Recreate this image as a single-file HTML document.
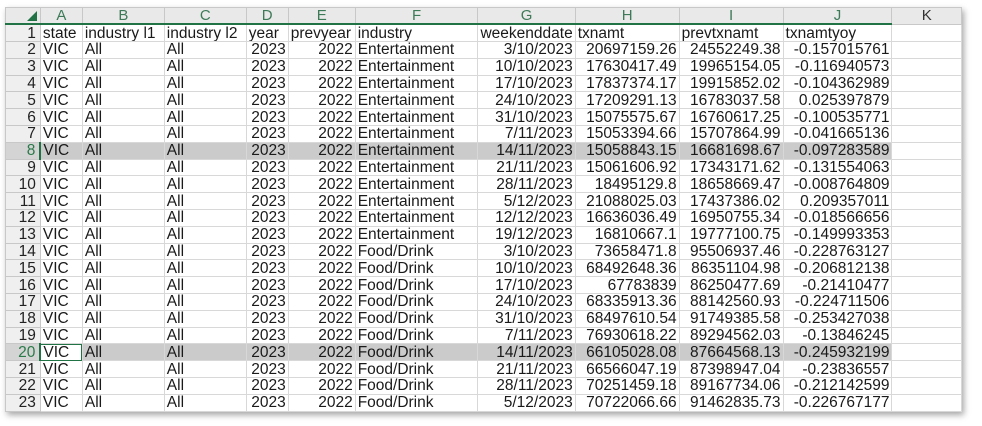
<!DOCTYPE html><html><head><style>
body{margin:0;background:#fff;width:982px;height:426px;overflow:hidden;font-family:"Liberation Sans",sans-serif;}
#f{position:absolute;left:5px;top:7px;width:957px;height:405px;background:#fff;box-shadow:2px 3px 6px rgba(0,0,0,.35);overflow:hidden;}
table{border-collapse:collapse;table-layout:fixed;position:absolute;left:0;top:0;}
td{border:1px solid #d8d8d8;height:15.8px;padding:0 2px;font-size:15.5px;line-height:15px;color:#1a1a1a;white-space:nowrap;overflow:hidden;}
tr{height:16.8px}
td.r{text-align:right}
tr.h td{background:#e9e9e9;color:#3c7a58;text-align:center;border-color:#c8c8c8;border-bottom:2px solid #217346;height:15px;font-size:15px}
tr.h td.k{color:#333;border-bottom:1px solid #c8c8c8}
td.n{background:#efefef;text-align:right;padding-right:4px;color:#222;border-color:#c8c8c8}
tr.s td{background:#cbcbcb}
tr.s td.n{background:#d4d4d4;color:#2a7a4a;border-right:2px solid #217346}
</style></head><body><div id="f"><table>
<colgroup><col style="width:35px"><col style="width:42px"><col style="width:82px"><col style="width:82px"><col style="width:42px"><col style="width:67px"><col style="width:123px"><col style="width:96px"><col style="width:104px"><col style="width:104px"><col style="width:109px"><col style="width:70px"></colgroup>
<tr class="h"><td style="position:relative"><span style="position:absolute;right:3px;bottom:2px;width:0;height:0;border-left:10px solid transparent;border-bottom:10px solid #217346"></span></td><td>A</td><td>B</td><td>C</td><td>D</td><td>E</td><td>F</td><td>G</td><td>H</td><td>I</td><td>J</td><td class="k">K</td></tr>
<tr><td class="n">1</td><td>state</td><td>industry l1</td><td>industry l2</td><td>year</td><td>prevyear</td><td>industry</td><td>weekenddate</td><td>txnamt</td><td>prevtxnamt</td><td>txnamtyoy</td><td></td></tr>
<tr><td class="n">2</td><td>VIC</td><td>All</td><td>All</td><td class="r">2023</td><td class="r">2022</td><td>Entertainment</td><td class="r">3/10/2023</td><td class="r">20697159.26</td><td class="r">24552249.38</td><td class="r">-0.157015761</td><td></td></tr>
<tr><td class="n">3</td><td>VIC</td><td>All</td><td>All</td><td class="r">2023</td><td class="r">2022</td><td>Entertainment</td><td class="r">10/10/2023</td><td class="r">17630417.49</td><td class="r">19965154.05</td><td class="r">-0.116940573</td><td></td></tr>
<tr><td class="n">4</td><td>VIC</td><td>All</td><td>All</td><td class="r">2023</td><td class="r">2022</td><td>Entertainment</td><td class="r">17/10/2023</td><td class="r">17837374.17</td><td class="r">19915852.02</td><td class="r">-0.104362989</td><td></td></tr>
<tr><td class="n">5</td><td>VIC</td><td>All</td><td>All</td><td class="r">2023</td><td class="r">2022</td><td>Entertainment</td><td class="r">24/10/2023</td><td class="r">17209291.13</td><td class="r">16783037.58</td><td class="r">0.025397879</td><td></td></tr>
<tr><td class="n">6</td><td>VIC</td><td>All</td><td>All</td><td class="r">2023</td><td class="r">2022</td><td>Entertainment</td><td class="r">31/10/2023</td><td class="r">15075575.67</td><td class="r">16760617.25</td><td class="r">-0.100535771</td><td></td></tr>
<tr><td class="n">7</td><td>VIC</td><td>All</td><td>All</td><td class="r">2023</td><td class="r">2022</td><td>Entertainment</td><td class="r">7/11/2023</td><td class="r">15053394.66</td><td class="r">15707864.99</td><td class="r">-0.041665136</td><td></td></tr>
<tr class="s"><td class="n">8</td><td>VIC</td><td>All</td><td>All</td><td class="r">2023</td><td class="r">2022</td><td>Entertainment</td><td class="r">14/11/2023</td><td class="r">15058843.15</td><td class="r">16681698.67</td><td class="r">-0.097283589</td><td style="background:#fff"></td></tr>
<tr><td class="n">9</td><td>VIC</td><td>All</td><td>All</td><td class="r">2023</td><td class="r">2022</td><td>Entertainment</td><td class="r">21/11/2023</td><td class="r">15061606.92</td><td class="r">17343171.62</td><td class="r">-0.131554063</td><td></td></tr>
<tr><td class="n">10</td><td>VIC</td><td>All</td><td>All</td><td class="r">2023</td><td class="r">2022</td><td>Entertainment</td><td class="r">28/11/2023</td><td class="r">18495129.8</td><td class="r">18658669.47</td><td class="r">-0.008764809</td><td></td></tr>
<tr><td class="n">11</td><td>VIC</td><td>All</td><td>All</td><td class="r">2023</td><td class="r">2022</td><td>Entertainment</td><td class="r">5/12/2023</td><td class="r">21088025.03</td><td class="r">17437386.02</td><td class="r">0.209357011</td><td></td></tr>
<tr><td class="n">12</td><td>VIC</td><td>All</td><td>All</td><td class="r">2023</td><td class="r">2022</td><td>Entertainment</td><td class="r">12/12/2023</td><td class="r">16636036.49</td><td class="r">16950755.34</td><td class="r">-0.018566656</td><td></td></tr>
<tr><td class="n">13</td><td>VIC</td><td>All</td><td>All</td><td class="r">2023</td><td class="r">2022</td><td>Entertainment</td><td class="r">19/12/2023</td><td class="r">16810667.1</td><td class="r">19777100.75</td><td class="r">-0.149993353</td><td></td></tr>
<tr><td class="n">14</td><td>VIC</td><td>All</td><td>All</td><td class="r">2023</td><td class="r">2022</td><td>Food/Drink</td><td class="r">3/10/2023</td><td class="r">73658471.8</td><td class="r">95506937.46</td><td class="r">-0.228763127</td><td></td></tr>
<tr><td class="n">15</td><td>VIC</td><td>All</td><td>All</td><td class="r">2023</td><td class="r">2022</td><td>Food/Drink</td><td class="r">10/10/2023</td><td class="r">68492648.36</td><td class="r">86351104.98</td><td class="r">-0.206812138</td><td></td></tr>
<tr><td class="n">16</td><td>VIC</td><td>All</td><td>All</td><td class="r">2023</td><td class="r">2022</td><td>Food/Drink</td><td class="r">17/10/2023</td><td class="r">67783839</td><td class="r">86250477.69</td><td class="r">-0.21410477</td><td></td></tr>
<tr><td class="n">17</td><td>VIC</td><td>All</td><td>All</td><td class="r">2023</td><td class="r">2022</td><td>Food/Drink</td><td class="r">24/10/2023</td><td class="r">68335913.36</td><td class="r">88142560.93</td><td class="r">-0.224711506</td><td></td></tr>
<tr><td class="n">18</td><td>VIC</td><td>All</td><td>All</td><td class="r">2023</td><td class="r">2022</td><td>Food/Drink</td><td class="r">31/10/2023</td><td class="r">68497610.54</td><td class="r">91749385.58</td><td class="r">-0.253427038</td><td></td></tr>
<tr><td class="n">19</td><td>VIC</td><td>All</td><td>All</td><td class="r">2023</td><td class="r">2022</td><td>Food/Drink</td><td class="r">7/11/2023</td><td class="r">76930618.22</td><td class="r">89294562.03</td><td class="r">-0.13846245</td><td></td></tr>
<tr class="s"><td class="n">20</td><td style="background:#fff;outline:1px solid #217346;outline-offset:-1px">VIC</td><td>All</td><td>All</td><td class="r">2023</td><td class="r">2022</td><td>Food/Drink</td><td class="r">14/11/2023</td><td class="r">66105028.08</td><td class="r">87664568.13</td><td class="r">-0.245932199</td><td style="background:#fff"></td></tr>
<tr><td class="n">21</td><td>VIC</td><td>All</td><td>All</td><td class="r">2023</td><td class="r">2022</td><td>Food/Drink</td><td class="r">21/11/2023</td><td class="r">66566047.19</td><td class="r">87398947.04</td><td class="r">-0.23836557</td><td></td></tr>
<tr><td class="n">22</td><td>VIC</td><td>All</td><td>All</td><td class="r">2023</td><td class="r">2022</td><td>Food/Drink</td><td class="r">28/11/2023</td><td class="r">70251459.18</td><td class="r">89167734.06</td><td class="r">-0.212142599</td><td></td></tr>
<tr><td class="n">23</td><td>VIC</td><td>All</td><td>All</td><td class="r">2023</td><td class="r">2022</td><td>Food/Drink</td><td class="r">5/12/2023</td><td class="r">70722066.66</td><td class="r">91462835.73</td><td class="r">-0.226767177</td><td></td></tr>
<tr><td class="n"></td><td></td><td></td><td></td><td></td><td></td><td></td><td></td><td></td><td></td><td></td><td></td></tr>
</table></div></body></html>
